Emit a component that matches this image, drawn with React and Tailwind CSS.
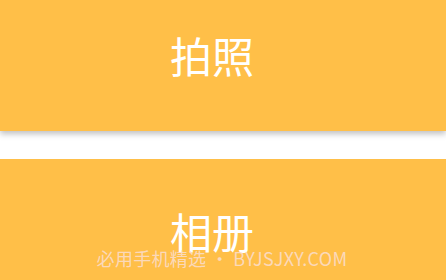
import React from 'react';

export default function App() {
  return (
    <div className="relative w-[446px] h-[280px] overflow-hidden bg-white font-['Noto_Sans_CJK_SC',sans-serif]">
      <div className="relative z-10 h-[131px] bg-[#ffbf48] flex justify-center pr-[22px] pt-[27px] shadow-[0_3px_6px_rgba(0,0,0,0.25)]">
        <span className="text-[42px] leading-[56px] font-normal text-white">拍照</span>
      </div>
      <div className="h-[28px] bg-white" />
      <div className="h-[121px] bg-[#ffbf48] flex justify-center pr-[22px] pt-[44px]">
        <span className="text-[42px] leading-[56px] font-normal text-white">相册</span>
      </div>
      <div className="absolute left-0 right-0 top-[246px] flex justify-center pr-[2px]">
        <span className="text-[18px] leading-[24px] tracking-[0.3px] text-[#fbdcc6] opacity-90">必用手机精选 • BYJSJXY.COM</span>
      </div>
    </div>
  );
}
